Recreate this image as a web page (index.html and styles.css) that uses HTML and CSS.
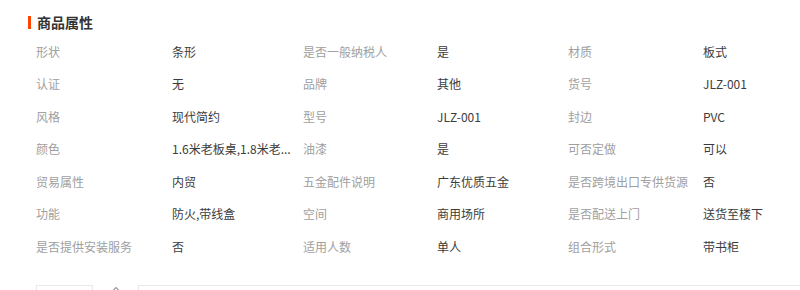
FILE: index.html
```html
<!DOCTYPE html>
<html lang="zh-CN">
<head>
<meta charset="utf-8">
<link rel="stylesheet" href="styles.css">
</head>
<body>
<div class="page">
  <h2 class="title"><span class="mark"></span>商品属性</h2>
  <div class="attrs">
    <div class="l">形状</div><div class="v">条形</div>
    <div class="l">是否一般纳税人</div><div class="v">是</div>
    <div class="l">材质</div><div class="v">板式</div>

    <div class="l">认证</div><div class="v">无</div>
    <div class="l">品牌</div><div class="v">其他</div>
    <div class="l">货号</div><div class="v">JLZ-001</div>

    <div class="l">风格</div><div class="v">现代简约</div>
    <div class="l">型号</div><div class="v">JLZ-001</div>
    <div class="l">封边</div><div class="v">PVC</div>

    <div class="l">颜色</div><div class="v">1.6米老板桌,1.8米老...</div>
    <div class="l">油漆</div><div class="v">是</div>
    <div class="l">可否定做</div><div class="v">可以</div>

    <div class="l">贸易属性</div><div class="v">内贸</div>
    <div class="l">五金配件说明</div><div class="v">广东优质五金</div>
    <div class="l">是否跨境出口专供货源</div><div class="v">否</div>

    <div class="l">功能</div><div class="v">防火,带线盒</div>
    <div class="l">空间</div><div class="v">商用场所</div>
    <div class="l">是否配送上门</div><div class="v">送货至楼下</div>

    <div class="l">是否提供安装服务</div><div class="v">否</div>
    <div class="l">适用人数</div><div class="v">单人</div>
    <div class="l">组合形式</div><div class="v">带书柜</div>
  </div>
  <div class="tabs">
    <div class="tab small"></div>
    <div class="caret"><svg width="10" height="6" viewBox="0 0 10 6"><path d="M1 5.5 L5 1.5 L9 5.5" fill="none" stroke="#999" stroke-width="1.2"/></svg></div>
    <div class="tab wide"></div>
  </div>
</div>
</body>
</html>
```
FILE: styles.css
```css
html, body {
  margin: 0;
  padding: 0;
  background: #fff;
}
body {
  font-family: "Noto Sans CJK SC", "Liberation Sans", sans-serif;
  width: 800px;
  height: 290px;
  overflow: hidden;
}
.page {
  padding: 12px 0 0 28px;
}
.title {
  display: flex;
  align-items: center;
  gap: 6px;
  margin: 0;
  height: 20px;
  font-size: 14px;
  font-weight: bold;
  color: #333;
  line-height: 20px;
}
.mark {
  width: 3px;
  height: 13px;
  background: #ff4400;
}
.attrs {
  margin: 3px 0 0 8px;
  display: grid;
  grid-template-columns: 136px 131px 134px 131px 135px 1fr;
  grid-auto-rows: 32.5px;
  align-items: center;
  font-size: 12px;
}
.l {
  color: #a0a0a0;
  white-space: nowrap;
}
.v {
  color: #3c3c3c;
  white-space: nowrap;
}
.tabs {
  margin: 22px 0 0 8px;
  display: flex;
  align-items: flex-start;
  height: 6px;
}
.tab {
  height: 6px;
  border: 1px solid #e8e8e8;
  border-bottom: none;
  box-sizing: border-box;
}
.small {
  width: 57px;
}
.caret {
  width: 45px;
  display: flex;
  justify-content: center;
  padding-top: 1px;
}
.wide {
  flex: 1;
  border-right: none;
}
```
